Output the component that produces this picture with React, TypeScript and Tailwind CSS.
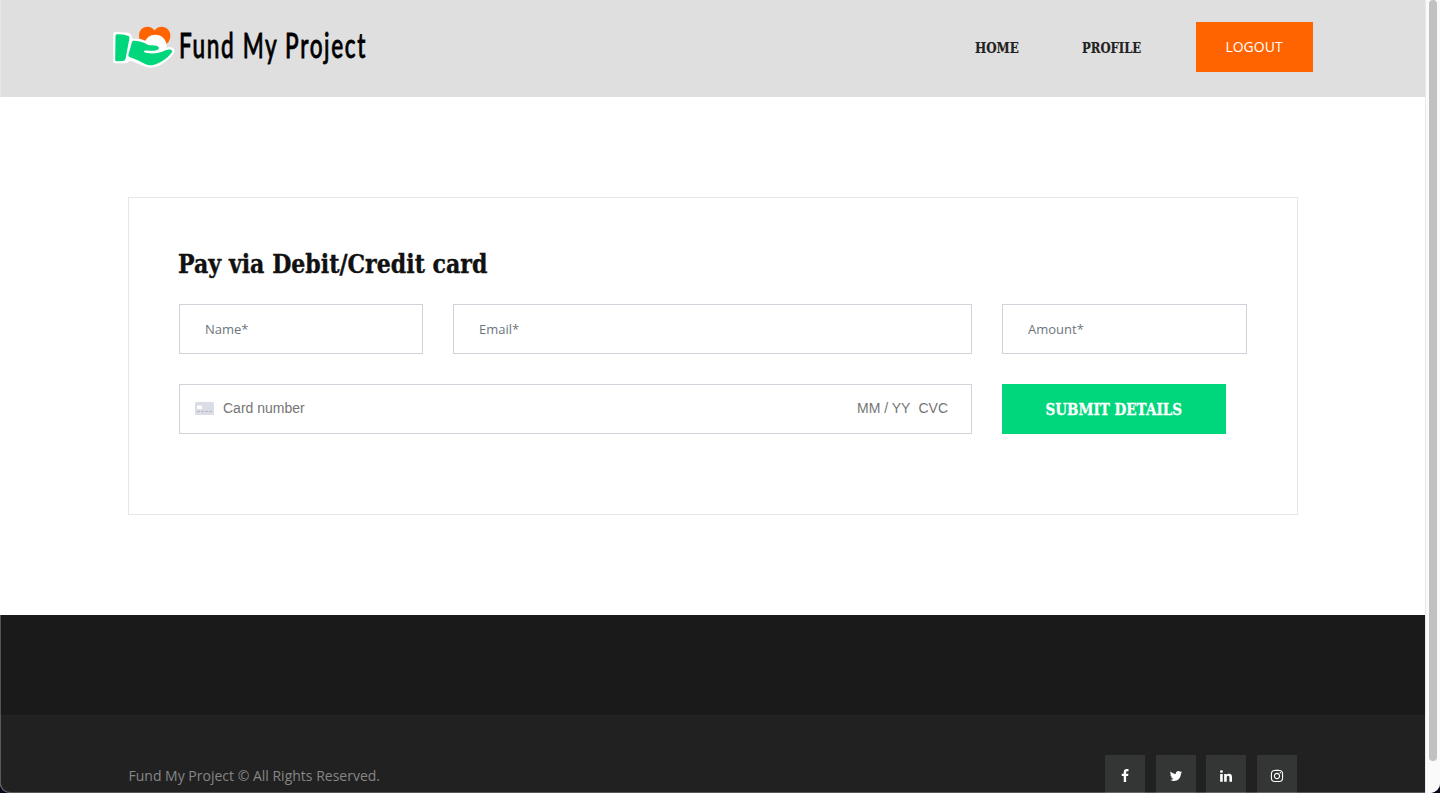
import type { ReactNode } from 'react';
import { FaInstagram } from 'react-icons/fa';

const slab = "font-['Roboto_Slab','DejaVu_Serif',serif]";

function Logo() {
  return (
    <a href="#" className="block" aria-label="Fund My Project">
      <svg width="270" height="60" viewBox="0 0 270 60">
        <path d="M42.500 32 L29 20.500 C24.500 13 28 5 35 4.800 C39 4.800 41.500 7 42.500 8.500 C43.500 7 46 4.800 50 4.800 C57 5 61 13 56.500 20 Z" fill="#ff6400" />
        <circle cx="43.300" cy="24" r="11.300" fill="#fff" />
        <path
          d="M3.500 12 L16 13 Q18 13.500 18.500 18.700 L28 19.200 Q33 20.800 38 23.500 Q46 23 48 27 Q48 28.500 46 29.500 Q50 30 57 27.300 Q61 27.500 60 30 Q54 38 44.300 42.300 Q39 44.500 34 42.300 L17 35.500 Q15 39.500 12 39 L3.500 39 Z"
          fill="#fff"
          stroke="#fff"
          strokeWidth="4.600"
          strokeLinejoin="round"
        />
        <path d="M5 12.200 Q12 11.800 16.500 14 Q17.800 14.700 17.300 17 L13.600 36.500 Q13.200 38.900 11 39 L4.500 39.200 Q3.200 39.200 3.200 37.800 L3.500 14 Q3.500 12.200 5 12.200 Z" fill="#00d67c" />
        <path
          d="M20 20 Q20.400 18.700 22 18.800 C29 19 32 21 37 23.300 C42 23 46.500 23.500 47 26.200 C46 28.800 41 29.300 35 28.500 C31 28.300 31 30.200 34 30.800 C40 32.200 47 31.500 52 29 C56 27 60.500 26.800 60.300 29.800 C55 37 49.500 39.800 44.500 42 C38 44.500 34.500 43 30 40.500 C25 37.500 21 36.500 17.500 35 Q16 34.200 16.400 32.500 Z"
          fill="#00d67c"
        />
        <text
          x="67"
          y="36"
          fill="#000"
          fontSize="34.5"
          fontWeight="500"
          textLength="188"
          lengthAdjust="spacingAndGlyphs"
          stroke="#000"
          strokeWidth=".8"
          letterSpacing="2.5"
          className="font-['Lato',sans-serif]"
        >
          Fund My Project
        </text>
      </svg>
    </a>
  );
}

function CardIcon() {
  return (
    <svg width="19" height="13" viewBox="0 0 19 13">
      <rect width="19" height="13" rx="1.500" fill="#dadde6" />
      <rect x="2" y="3.500" width="5" height="3.500" rx=".7" fill="#fff" />
      <path d="M2 9.500h15" stroke="#b5b9c4" strokeDasharray="3 1" />
    </svg>
  );
}

function Social({ label, children }: { label: string; children: ReactNode }) {
  return (
    <a href="#" aria-label={label} className="flex h-10 w-10 items-center justify-center bg-[#343635] pt-0.5 text-white">
      {children}
    </a>
  );
}

function Glyph({ d }: { d: string }) {
  return (
    <svg width="14" height="14" viewBox="0 0 1792 1792" fill="currentColor">
      <path d={d} />
    </svg>
  );
}

const facebook =
  'M1343 12v264h-157q-86 0-116 36t-30 108v189h293l-39 296h-254v759h-306v-759h-255v-296h255v-218q0-186 104-288.500t277-102.500q147 0 228 12z';
const twitter =
  'M1684 408q-67 98-162 167 1 14 1 42 0 130-38 259.500t-115.500 248.500-184.500 210.500-258 146-323 54.500q-271 0-496-145 35 4 78 4 225 0 401-138-105-2-188-64.500t-114-159.500q33 5 61 5 43 0 85-11-112-23-185.500-111.500t-73.500-205.500v-4q68 38 146 41-66-44-105-115t-39-154q0-88 44-163 121 149 294.500 238.500t371.500 99.500q-8-38-8-74 0-134 94.500-228.500t228.500-94.500q140 0 236 102 109-21 205-78-37 115-142 178 93-10 186-50z';
const linkedin =
  'M477 625v991h-330v-991h330zm21-306q1 73-50.500 122t-135.500 49h-2q-82 0-132-49t-50-122q0-74 51.500-122.500t134.500-48.500 133 48.500 51 122.500zm1166 729v568h-329v-530q0-105-40.500-164.500t-126.500-59.500q-63 0-105.500 34.500t-63.500 85.500q-11 30-11 81v553h-329q2-399 2-647t-1-296l-1-48h329v144h-2q20-32 41-56t56.500-52 87-43.500 114.500-15.500q171 0 275 113.500t104 332.500z';

const field =
  'h-[50px] min-w-0 border border-[#ced4da] bg-white px-[25px] text-[13px] text-gray-800 outline-none placeholder:text-[#6c757d]';

export default function App() {
  return (
    <div className="h-[793px] w-[1440px] overflow-hidden bg-[#0c0418] font-['Open_Sans',sans-serif]">
      <div className="relative flex h-full overflow-hidden rounded-b-[10px] bg-white">
        <div className="flex w-[1425px] flex-col">
          <header className="flex h-[97px] items-start bg-[#dfdfdf] pl-[112px] pr-[112px] pt-[22px]">
            <Logo />
            <nav className={`ml-auto flex pt-[15px] text-sm font-bold leading-[22px] text-[#222] ${slab}`}>
              <a href="#" className="w-[107px]">
                <span className="inline-block origin-left scale-x-[.85] [-webkit-text-stroke:0.2px]">HOME</span>
              </a>
              <a href="#" className="w-[114px]">
                <span className="inline-block origin-left scale-x-[.83] [-webkit-text-stroke:0.2px]">PROFILE</span>
              </a>
            </nav>
            <a href="#" className="flex h-[50px] w-[117px] items-center justify-center bg-[#ff6400] pr-px text-sm text-white">
              LOGOUT
            </a>
          </header>

          <main className="h-[518px] px-[128px] pt-[100px]">
            <form className="h-[318px] w-[1170px] border border-[#e7e7e7] px-[50px] pt-[46px]" onSubmit={(e) => e.preventDefault()}>
              <h3 className={`-ml-px h-[60px] whitespace-nowrap text-[26px] font-bold leading-10 text-[#111] ${slab}`}>
                <span className="inline-block origin-left scale-x-[.85] [-webkit-text-stroke:0.4px]">Pay via Debit/Credit card</span>
              </h3>
              <div className="grid grid-cols-[244px_519px_245px] gap-[30px]">
                <input className={field} placeholder="Name*" />
                <input className={field} placeholder="Email*" />
                <input className={field} placeholder="Amount*" />
                <div className="col-span-2 flex h-[50px] items-center border border-[#ced4da] pb-0.5 pl-[15px] pr-[23px] font-['Liberation_Sans',Arial,sans-serif] text-sm text-[#757575]">
                  <CardIcon />
                  <span className="ml-[9px]">Card number</span>
                  <span className="ml-auto">MM / YY</span>
                  <span className="ml-2">CVC</span>
                </div>
                <button className={`h-[50px] w-[224px] whitespace-nowrap bg-[#00d67c] pt-0.5 text-base font-bold text-white ${slab}`}>
                  <span className="inline-block scale-x-[.845] [-webkit-text-stroke:0.3px]">SUBMIT DETAILS</span>
                </button>
              </div>
            </form>
          </main>

          <footer className="flex h-[178px] flex-col">
            <div className="h-[100px] bg-[#1a1a1a]" />
            <div className="flex h-[78px] items-start justify-between border-t border-[#242424] bg-[#212121] px-[128px] pt-[39px]">
              <p className="pl-[.5px] pt-[11px] text-sm leading-5 text-[#868686]">Fund My Project © All Rights Reserved.</p>
              <div className="flex gap-[10.600px]">
                <Social label="Facebook"><Glyph d={facebook} /></Social>
                <Social label="Twitter"><Glyph d={twitter} /></Social>
                <Social label="LinkedIn"><Glyph d={linkedin} /></Social>
                <Social label="Instagram"><FaInstagram size={14} /></Social>
              </div>
            </div>
          </footer>
        </div>
        <div className="flex w-[15px] justify-center border-l border-[#e8e8e8] bg-[#fafafa]">
          <div className="h-[761px] w-2 rounded-full bg-[#c1c1c1]" />
        </div>
        <div className="pointer-events-none absolute inset-0 rounded-b-[10px] border-x border-b border-white/25 border-r-transparent" />
      </div>
    </div>
  );
}
